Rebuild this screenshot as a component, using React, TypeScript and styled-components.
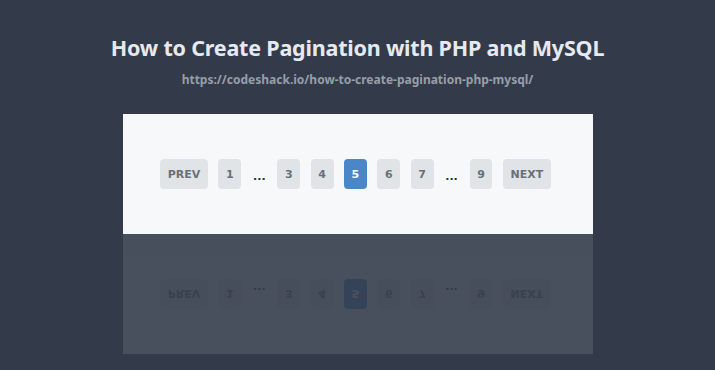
import React from "react";
import styled, {createGlobalStyle} from "styled-components";

const GlobalStyle = createGlobalStyle`
    html, body {
        margin: 0;
        padding: 0;
        background-color: #333b4a;
    }
`;

const Page = styled.main`
    width: 715px;
    height: 370px;
    overflow: hidden;
    display: flex;
    flex-direction: column;
    align-items: center;
    font-family: "Noto Sans", "Open Sans", sans-serif;
`;

const Title = styled.h1`
    margin: 34px 0 0;
    font-size: 21.5px;
    line-height: 28px;
    font-weight: 700;
    color: #e6e9ee;
    letter-spacing: -0.2px;
`;

const Link = styled.p`
    margin: 10px 0 0;
    font-size: 12px;
    line-height: 16px;
    font-weight: 700;
    color: #979ea8;
`;

const Stage = styled.div`
    margin-top: 26px;
    display: flex;
    flex-direction: column;
`;

const Card = styled.div<{$reflect?: boolean}>`
    width: 470px;
    height: 120px;
    box-sizing: border-box;
    padding-right: 4px;
    background-color: #f6f8f9;
    display: flex;
    align-items: center;
    justify-content: center;
    transform: ${props => props.$reflect ? 'scaleY(-1)' : 'none'};
    opacity: ${props => props.$reflect ? 0.11 : 1};
`;

const List = styled.ul`
    margin: 0;
    padding: 0;
    list-style: none;
    display: flex;
    align-items: center;
    gap: 10.5px;
    font-family: "DejaVu Sans", Verdana, sans-serif;
    font-size: 11px;
    font-weight: 700;
`;

const PageButton = styled.li<{$active?: boolean}>`
    height: 30px;
    padding: 0 7.6px;
    box-sizing: border-box;
    display: flex;
    align-items: center;
    justify-content: center;
    border-radius: 4px;
    background-color: ${props => props.$active ? '#4a87c8' : '#e1e4e6'};
    color: ${props => props.$active ? '#ffffff' : '#6a7079'};
`;

const Dots = styled.li`
    width: 15px;
    display: flex;
    justify-content: center;
    color: #2c3038;
    padding-top: 4px;
`;

type Item = {kind: 'page' | 'dots'; label: string; active?: boolean};

const items: Item[] = [
    {kind: 'page', label: 'PREV'},
    {kind: 'page', label: '1'},
    {kind: 'dots', label: '...'},
    {kind: 'page', label: '3'},
    {kind: 'page', label: '4'},
    {kind: 'page', label: '5', active: true},
    {kind: 'page', label: '6'},
    {kind: 'page', label: '7'},
    {kind: 'dots', label: '...'},
    {kind: 'page', label: '9'},
    {kind: 'page', label: 'NEXT'},
];

function Pagination(): React.ReactElement {
    return <List>
        {items.map((item, i) => item.kind === 'dots'
            ? <Dots key={i}>{item.label}</Dots>
            : <PageButton key={i} $active={item.active}>{item.label}</PageButton>
        )}
    </List>
}

export default function App(): React.ReactElement {
    return <>
        <GlobalStyle/>
        <Page>
            <Title>How to Create Pagination with PHP and MySQL</Title>
            <Link>https://codeshack.io/how-to-create-pagination-php-mysql/</Link>
            <Stage>
                <Card>
                    <Pagination/>
                </Card>
                <Card $reflect aria-hidden>
                    <Pagination/>
                </Card>
            </Stage>
        </Page>
    </>
}
